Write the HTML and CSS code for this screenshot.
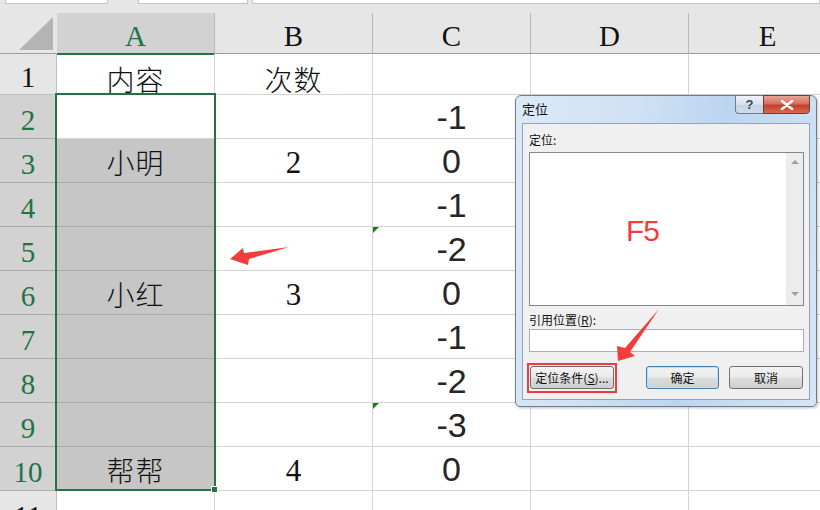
FILE: index.html
```html
<!DOCTYPE html>
<html lang="zh-CN">
<head>
    <meta charset="UTF-8">
    <title>定位</title>
    <link rel="stylesheet" href="styles.css">
</head>
<body>

    <!-- bits of the ribbon above the sheet -->
    <div class="topbar">
        <span class="tb tb1"></span>
        <span class="tb tb2"></span>
        <span class="tb tb3"></span>
    </div>

    <div class="sheet">
        <!-- column headers -->
        <div class="hd corner"><span class="tri"></span></div>
        <div class="hd on">A</div>
        <div class="hd">B</div>
        <div class="hd">C</div>
        <div class="hd">D</div>
        <div class="hd">E</div>

        <div class="rh r1">1</div>
        <div class="c cjk r1">内容</div>
        <div class="c cjk r1">次数</div>
        <div class="c"></div>
        <div class="c"></div>
        <div class="c"></div>

        <div class="rh on">2</div>
        <div class="c"></div>
        <div class="c"></div>
        <div class="c val">-1</div>
        <div class="c"></div>
        <div class="c"></div>

        <div class="rh on">3</div>
        <div class="c grey cjk">小明</div>
        <div class="c num">2</div>
        <div class="c val">0</div>
        <div class="c"></div>
        <div class="c"></div>

        <div class="rh on">4</div>
        <div class="c grey"></div>
        <div class="c"></div>
        <div class="c val">-1</div>
        <div class="c"></div>
        <div class="c"></div>

        <div class="rh on">5</div>
        <div class="c grey"></div>
        <div class="c"></div>
        <div class="c val flag">-2</div>
        <div class="c"></div>
        <div class="c"></div>

        <div class="rh on">6</div>
        <div class="c grey cjk">小红</div>
        <div class="c num">3</div>
        <div class="c val">0</div>
        <div class="c"></div>
        <div class="c"></div>

        <div class="rh on">7</div>
        <div class="c grey"></div>
        <div class="c"></div>
        <div class="c val">-1</div>
        <div class="c"></div>
        <div class="c"></div>

        <div class="rh on">8</div>
        <div class="c grey"></div>
        <div class="c"></div>
        <div class="c val">-2</div>
        <div class="c"></div>
        <div class="c"></div>

        <div class="rh on">9</div>
        <div class="c grey"></div>
        <div class="c"></div>
        <div class="c val flag">-3</div>
        <div class="c"></div>
        <div class="c"></div>

        <div class="rh on">10</div>
        <div class="c grey cjk">帮帮</div>
        <div class="c num">4</div>
        <div class="c val">0</div>
        <div class="c"></div>
        <div class="c"></div>

        <div class="rh">11</div>
        <div class="c"></div>
        <div class="c"></div>
        <div class="c"></div>
        <div class="c"></div>
        <div class="c"></div>
    </div>

    <!-- selection A2:A10 -->
    <div class="selection"><span class="handle"></span></div>

    <!-- Go To dialog -->
    <div class="dialog">
        <div class="titlebar">
            <span class="title">定位</span>
            <div class="winbtns">
                <span class="wb help">?</span>
                <span class="wb close">
                    <svg width="14" height="10" viewBox="0 0 14 10"><path d="M2 1 L12 9 M12 1 L2 9" stroke="#fff" stroke-width="2.6" stroke-linecap="round"/></svg>
                </span>
            </div>
        </div>
        <div class="panel">
            <div class="lbl">定位:</div>
            <div class="list">
                <div class="list-body"><span class="f5">F5</span></div>
                <div class="scroll">
                    <span class="arr up"></span>
                    <span class="arr down"></span>
                </div>
            </div>
            <div class="lbl lbl2">引用位置(<u>R</u>):</div>
            <div class="field"></div>
            <div class="btnrow">
                <span class="redbox"><button class="btn special">定位条件(<u>S</u>)...</button></span>
                <button class="btn ok">确定</button>
                <button class="btn cancel">取消</button>
            </div>
        </div>
    </div>

    <!-- red hint arrows -->
    <svg class="marks" width="820" height="510" viewBox="0 0 820 510">
        <polygon points="230,259 243,248 244,253 289,247 249,259 248,265" fill="#f23d3d"/>
        <polygon points="618,361 617,346 625,348 659,309 630,352 635,356" fill="#f23d3d"/>
    </svg>

</body>
</html>
```

FILE: styles.css
```css
/* sheet + dialog */
body {
    margin: 0;
    width: 820px;
    height: 510px;
    overflow: hidden;
    background-color: #ffffff;
    position: relative;
}

.topbar {
    display: flex;
    height: 13px;
    background-color: #e6e6e6;
}

.tb {
    height: 3px;
    background-color: #ffffff;
    border: 1px solid #c4c4c4;
    border-top: none;
}

.tb1 { margin-left: 5px; width: 101px; }
.tb2 { margin-left: 30px; width: 108px; }
.tb3 { margin-left: 4px; flex: 1; }

.sheet {
    display: grid;
    grid-template-columns: 57px 158px 158px 158px 158px 158px;
    grid-template-rows: 41px 41px repeat(10, 44px);
}

.sheet > div {
    box-sizing: border-box;
    display: flex;
    align-items: center;
    justify-content: center;
    border-right: 1px solid #d4d4d4;
    border-bottom: 1px solid #d4d4d4;
}

/* headers */
.hd {
    background-color: #e6e6e6;
    font-family: "Liberation Serif", serif;
    font-size: 29px;
    color: #111;
    padding-top: 6px;
    border-right-color: #b8b8b8 !important;
    border-bottom-color: #9d9d9d !important;
}

.hd.on {
    background-color: #d2d2d2;
    color: #217346;
    border-bottom: 2px solid #217346 !important;
    margin-bottom: -1px;
}

.corner {
    position: relative;
    border-right-color: #e6e6e6 !important;
}

.corner .tri {
    position: absolute;
    left: 19px;
    top: 4px;
    width: 0;
    height: 0;
    border-left: 34px solid transparent;
    border-bottom: 33px solid #b4b4b4;
}

.rh {
    background-color: #e6e6e6;
    font-family: "Liberation Serif", serif;
    font-size: 29px;
    color: #111;
    padding-top: 7px;
    border-right-color: #bdbdbd !important;
    border-bottom-color: #bdbdbd !important;
}

.rh.on {
    background-color: #d2d2d2;
    color: #217346;
    border-bottom-color: #ababab !important;
}

/* cells */
.c {
    color: #111;
}

.grey {
    background-color: #c6c6c6;
    border-bottom-color: #a8a8a8 !important;
}

.cjk {
    font-family: "Noto Sans CJK SC", sans-serif;
    font-weight: 300;
    font-size: 28px;
    letter-spacing: 1px;
    padding-top: 3px;
}

.cjk.r1 {
    padding-top: 10px;
}

.num {
    font-family: "Liberation Serif", "DejaVu Serif", serif;
    font-size: 31px;
    padding-top: 4px;
}

.val {
    font-family: "Liberation Sans", Arial, sans-serif;
    font-size: 34px;
    color: #262626;
    padding-top: 1px;
}

.flag {
    position: relative;
}

.flag::before {
    content: "";
    position: absolute;
    left: 0;
    top: 0;
    border-top: 6px solid #1e7e1e;
    border-right: 6px solid transparent;
}

.selection {
    position: absolute;
    left: 55px;
    top: 93px;
    width: 161px;
    height: 398px;
    box-sizing: border-box;
    border: 2px solid #217346;
}

.handle {
    position: absolute;
    right: -4px;
    bottom: -4px;
    width: 5px;
    height: 5px;
    background-color: #217346;
    border: 1px solid #ffffff;
}

/* dialog */
.dialog {
    position: absolute;
    left: 515px;
    top: 95px;
    width: 302px;
    height: 312px;
    box-sizing: border-box;
    border: 1px solid #6f7e91;
    border-radius: 6px 6px 5px 5px;
    background: linear-gradient(100deg, #dce9f7 0%, #cfe1f4 35%, #bcd5ef 60%, #d6e6f6 100%);
    box-shadow: 1px 1px 3px rgba(0, 0, 0, 0.25);
    display: flex;
    flex-direction: column;
    font-family: "Noto Sans CJK SC", sans-serif;
    font-size: 12px;
    color: #111;
}

.titlebar {
    height: 27px;
    display: flex;
    align-items: flex-start;
    justify-content: space-between;
}

.title {
    margin-left: 6px;
    margin-top: 3px;
    font-size: 13px;
}

.winbtns {
    display: flex;
    margin-top: -1px;
    margin-right: 6px;
}

.wb {
    height: 17px;
    box-sizing: content-box;
    display: flex;
    align-items: center;
    justify-content: center;
}

.help {
    width: 27px;
    border: 1px solid #6b7a8e;
    border-right: none;
    border-radius: 0 0 0 4px;
    background: linear-gradient(#eef3f9, #d6e0ec 50%, #c3d1e1 51%, #cfdced);
    font-family: "Liberation Sans", sans-serif;
    font-weight: bold;
    font-size: 13px;
    color: #3d4656;
}

.close {
    width: 45px;
    border: 1px solid #6b3b35;
    border-radius: 0 0 4px 0;
    background: linear-gradient(#e8a596, #d7705e 45%, #c2412c 55%, #d66a52);
}

.panel {
    flex: 1;
    margin: 0 6px 6px 6px;
    background-color: #f0f0f0;
    border: 1px solid #8fa3bb;
    padding: 8px 5px 0 6px;
}

.lbl {
    height: 16px;
    line-height: 16px;
    margin-bottom: 4px;
}

.lbl2 {
    margin-top: 6px;
    margin-bottom: 1px;
}

.list {
    height: 154px;
    box-sizing: border-box;
    border: 1px solid #82878f;
    background-color: #ffffff;
    display: flex;
}

.list-body {
    flex: 1;
    padding: 63px 0 0 96px;
}

.f5 {
    font-family: "Liberation Sans", sans-serif;
    font-size: 30px;
    line-height: 30px;
    letter-spacing: -1px;
    color: #f23d3d;
}

.scroll {
    width: 17px;
    background-color: #ececec;
    display: flex;
    flex-direction: column;
    align-items: center;
    justify-content: space-between;
    padding: 7px 0 9px;
}

.arr {
    width: 0;
    height: 0;
    border-left: 4px solid transparent;
    border-right: 4px solid transparent;
}

.arr.up { border-bottom: 4px solid #a0a0a0; }
.arr.down { border-top: 4px solid #a0a0a0; }

.field {
    height: 23px;
    box-sizing: border-box;
    border: 1px solid #abadb3;
    background-color: #ffffff;
}

.btnrow {
    display: flex;
    align-items: flex-start;
    margin-top: 11px;
}

.redbox {
    display: flex;
    margin-left: -2px;
    padding: 1px 1px 2px 1px;
    border: 2px solid #f23d3d;
}

.btn {
    height: 23px;
    padding: 0;
    box-sizing: border-box;
    border: 1px solid #707070;
    border-radius: 3px;
    background: linear-gradient(#f2f2f2, #ebebeb 48%, #dddddd 52%, #cfcfcf);
    font-family: "Noto Sans CJK SC", sans-serif;
    font-size: 12px;
    color: #111;
}

.special {
    width: 84px;
}

.ok {
    width: 73px;
    margin-top: 3px;
    margin-left: 29px;
    border-color: #3c7fb1;
    box-shadow: inset 0 0 0 1px #b8e2fa;
}

.cancel {
    width: 74px;
    margin-top: 3px;
    margin-left: 10px;
}

.marks {
    position: absolute;
    left: 0;
    top: 0;
}
```
